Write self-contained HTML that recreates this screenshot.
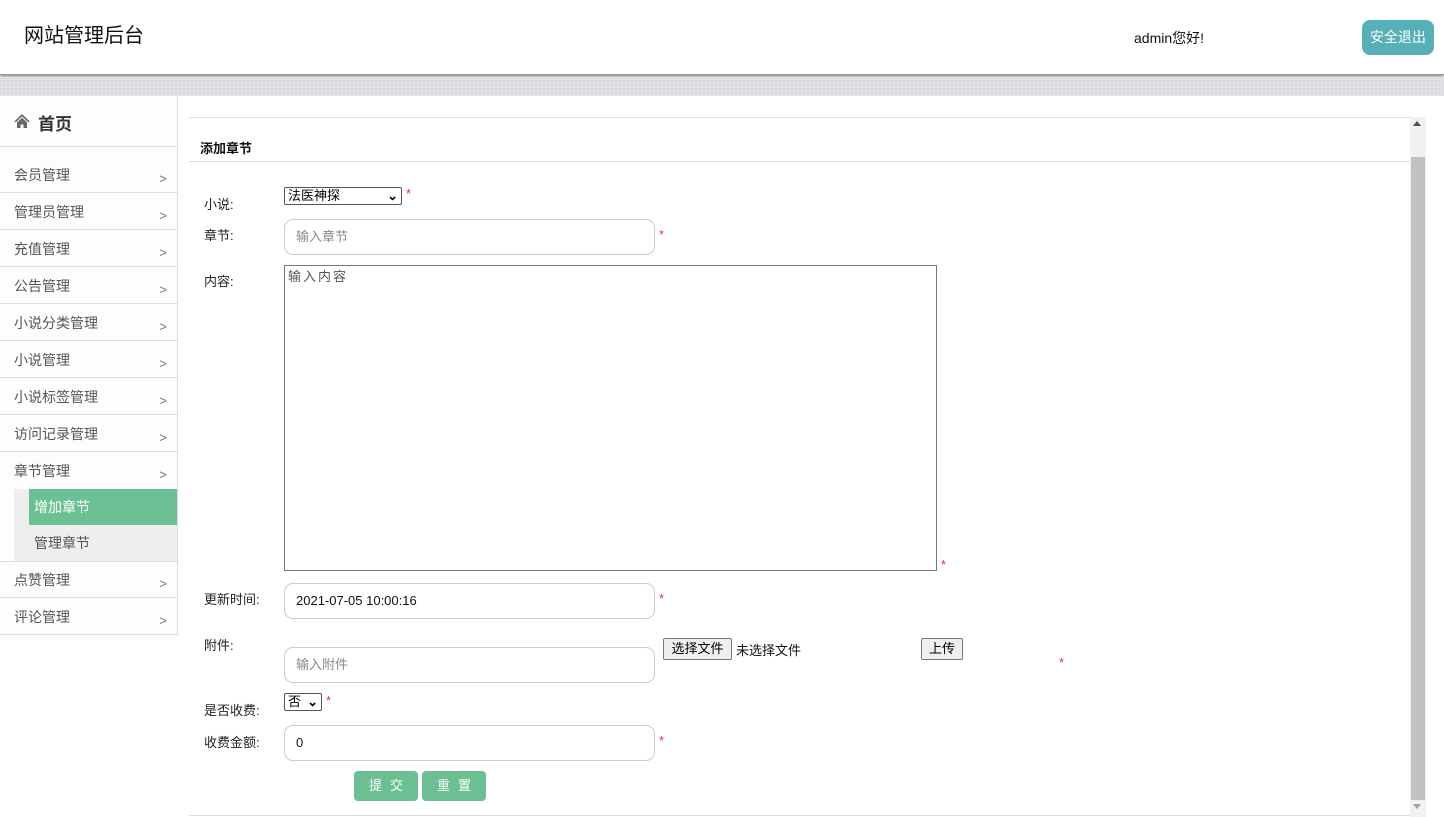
<!DOCTYPE html>
<html><head><meta charset="utf-8">
<style>
*{box-sizing:border-box;margin:0;padding:0}
body{width:1444px;height:817px;overflow:hidden;background:#fff;font-family:"Liberation Sans","Noto Sans CJK SC",sans-serif;font-size:13px;color:#333;position:relative}
.a{position:absolute}
.hdr{left:0;top:0;width:1444px;height:75px;background:#fff;box-shadow:0 1px 3px #666;border-bottom:1px solid #999}
.band{left:0;top:77px;width:1444px;height:19px;background:#dcdde1;background-image:radial-gradient(#e8e9ec 1px,transparent 1px);background-size:4px 4px}
.side{left:0;top:96px;width:178px;height:540px;border-right:1px solid #ddd;background:#fdfdfd}
.item{position:absolute;left:0;width:177px;height:37px;border-bottom:1px solid #ddd;font-size:14px;color:#555;padding-left:14px;line-height:39px}
.item:after{content:">";position:absolute;right:10px;top:3px;color:#777;font-size:13px}
.lbl{font-size:13px;color:#222}
.inp{border:1px solid #ccc;border-radius:9px;height:36px;width:371px;left:284px;padding-left:11px;line-height:34px;font-size:13px}
.star{color:#e33;font-size:13px}
.sel{border:1px solid #555;border-radius:2px;height:18px;font-size:13px;line-height:16px;padding-left:3px;color:#000;background:#fff}
.btn{background:#6bbf93;color:#fff;border-radius:4px;height:30px;width:64px;text-align:center;line-height:30px;font-size:13px;letter-spacing:8px;padding-left:8px}
.gb{background:#efefef;border:1px solid #767676;border-radius:2px;height:22px;font-size:13px;line-height:20px;text-align:center;color:#000}
</style></head><body>
<div class="a hdr"></div>
<div class="a" style="left:24px;top:19px;font-size:20px;color:#111">网站管理后台</div>
<div class="a" style="left:1134px;top:28px;font-size:14px;color:#111">admin您好!</div>
<div class="a" style="left:1362px;top:20px;width:72px;height:35px;background:#55b0b8;border-radius:8px;color:#fff;font-size:14px;line-height:35px;text-align:center">安全退出</div>
<div class="a band"></div>
<div class="a side"></div>
<svg class="a" style="left:14px;top:113px" width="16" height="16" viewBox="0 0 16 16"><path d="M8 1L0.5 8.2l1.2 1.2L8 3.4l6.3 6 1.2-1.2z M3 9.5V15h3.5v-3.5h3V15H13V9.5L8 4.8z" fill="#666"/></svg>
<div class="a" style="left:38px;top:110px;font-size:17px;font-weight:bold;color:#333">首页</div>
<div class="a" style="left:0;top:146px;width:177px;border-top:1px solid #ddd"></div>
<div class="item" style="top:156px;border-top:none">会员管理</div>
<div class="item" style="top:193px">管理员管理</div>
<div class="item" style="top:230px">充值管理</div>
<div class="item" style="top:267px">公告管理</div>
<div class="item" style="top:304px">小说分类管理</div>
<div class="item" style="top:341px">小说管理</div>
<div class="item" style="top:378px">小说标签管理</div>
<div class="item" style="top:415px">访问记录管理</div>
<div class="item" style="top:452px;border:none">章节管理</div>
<div class="a" style="left:14px;top:489px;width:163px;height:72px;background:#eee"></div>
<div class="a" style="left:29px;top:489px;width:148px;height:36px;background:#6bc194;color:#fff;font-size:14px;line-height:36px;padding-left:5px">增加章节</div>
<div class="a" style="left:34px;top:525px;font-size:14px;color:#555;line-height:36px">管理章节</div>
<div class="a" style="left:0;top:561px;width:177px;border-top:1px solid #ddd"></div>
<div class="item" style="top:561px">点赞管理</div>
<div class="item" style="top:598px">评论管理</div>

<div class="a" style="left:189px;top:117px;width:1221px;border-top:1px solid #ddd"></div>
<div class="a" style="left:200px;top:138px;font-size:13px;font-weight:bold;color:#111">添加章节</div>
<div class="a" style="left:189px;top:161px;width:1221px;border-top:1px solid #ddd"></div>
<div class="a" style="left:1410px;top:117px;width:16px;height:700px;background:#f1f1f1"></div>
<div class="a" style="left:1411px;top:157px;width:14px;height:643px;background:#c1c1c1"></div>
<div class="a" style="left:1413px;top:121px;width:0;height:0;border:4px solid transparent;border-bottom:5px solid #505050;border-top:none"></div>
<div class="a" style="left:1413px;top:804px;width:0;height:0;border:4px solid transparent;border-top:5px solid #a0a0a0;border-bottom:none"></div>
<div class="a" style="left:189px;top:815px;width:1221px;border-top:1px solid #ddd"></div>

<div class="a lbl" style="left:204px;top:194px">小说:</div>
<div class="a sel" style="left:284px;top:187px;width:118px">法医神探<span style="position:absolute;right:3px;top:0;font-weight:bold">⌄</span></div>
<div class="a star" style="left:406px;top:186px">*</div>
<div class="a lbl" style="left:204px;top:225px">章节:</div>
<div class="a inp" style="top:219px;color:#888">输入章节</div>
<div class="a star" style="left:659px;top:227px">*</div>
<div class="a lbl" style="left:204px;top:271px">内容:</div>
<div class="a" style="left:284px;top:265px;width:653px;height:306px;border:1px solid #767676;padding:0 3px;color:#555;font-size:13px;letter-spacing:2px">输入内容</div>
<div class="a star" style="left:941px;top:557px">*</div>
<div class="a lbl" style="left:204px;top:589px">更新时间:</div>
<div class="a inp" style="top:583px;color:#111">2021-07-05 10:00:16</div>
<div class="a star" style="left:659px;top:591px">*</div>
<div class="a lbl" style="left:204px;top:635px">附件:</div>
<div class="a inp" style="top:647px;color:#888">输入附件</div>
<div class="a gb" style="left:663px;top:638px;width:69px">选择文件</div>
<div class="a" style="left:736px;top:640px;font-size:13px;color:#111">未选择文件</div>
<div class="a gb" style="left:921px;top:638px;width:42px">上传</div>
<div class="a star" style="left:1059px;top:655px">*</div>
<div class="a lbl" style="left:204px;top:700px">是否收费:</div>
<div class="a sel" style="left:284px;top:693px;width:38px">否<span style="position:absolute;right:3px;top:0;font-weight:bold">⌄</span></div>
<div class="a star" style="left:326px;top:693px">*</div>
<div class="a lbl" style="left:204px;top:732px">收费金额:</div>
<div class="a inp" style="top:725px;color:#111">0</div>
<div class="a star" style="left:659px;top:733px">*</div>
<div class="a btn" style="left:354px;top:771px">提交</div>
<div class="a btn" style="left:422px;top:771px">重置</div>
</body></html>
